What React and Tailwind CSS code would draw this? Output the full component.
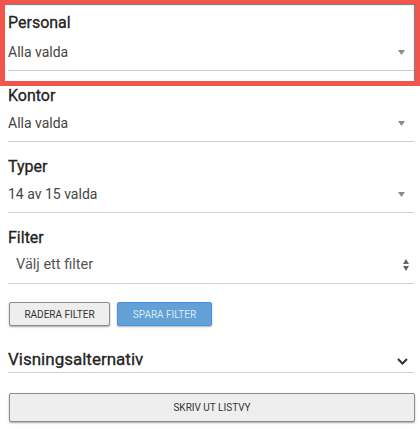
const Caret = () => (
  <svg width="7" height="5" viewBox="0 0 7 5" className="shrink-0">
    <path d="M0 0h7L3.5 5z" fill="#8a8a8a" />
  </svg>
);

function Field({ label, value, first }) {
  return (
    <div className={`border-b border-[#cfcfcf] pb-2 ${first ? 'pt-[13px]' : 'pt-[15px]'}`}>
      <div className="text-base leading-5 text-[#222] [-webkit-text-stroke:0.3px_#222]">{label}</div>
      <div className={`flex items-center justify-between pr-[9px] ${first ? 'mt-[9px]' : 'mt-[7px]'}`}>
        <span className="text-sm leading-5 text-[#444]">{value}</span>
        <Caret />
      </div>
    </div>
  );
}

export default function App() {
  return (
    <div className="w-[420px] bg-white pl-2 pr-1.5 font-['Roboto',sans-serif]">
      <div className="relative">
        <Field first label="Personal" value="Alla valda" />
        {/* highlight box */}
        <div className="pointer-events-none absolute -left-2 -right-1.5 top-0 h-[86px] border-[5px] border-t-4 border-[#f2554b] shadow-[inset_-1px_1px_1px_rgba(0,0,0,0.55)]" />
      </div>
      <Field label="Kontor" value="Alla valda" />
      <Field label="Typer" value="14 av 15 valda" />

      <div className="border-b border-[#cfcfcf] pb-2 pt-[15px]">
        <div className="text-base leading-5 text-[#222] [-webkit-text-stroke:0.3px_#222]">Filter</div>
        <div className="mt-[7px] flex items-center justify-between pl-2 pr-[5px]">
          <span className="text-[14.5px] leading-5 text-[#555]">Välj ett filter</span>
          <svg width="6" height="12" viewBox="0 0 6 12">
            <path d="M3 0L6 5H0z M0 7h6L3 12z" fill="#666" />
          </svg>
        </div>
      </div>

      <div className="mt-[18px] flex gap-[7px] pl-px">
        <button className="h-6 w-[101px] rounded-[2px] border border-[#8c8c8c] bg-[#eeeeee] text-[10px] text-[#333] shadow-[0_1px_2px_rgba(0,0,0,0.35)]">
          RADERA FILTER
        </button>
        <button className="h-6 w-[95px] rounded-[2px] border border-[#4d8fe8] bg-[#62a0d6] text-[10px] text-[#dbe8f5] shadow-[0_1px_2px_rgba(0,0,0,0.3)]">
          SPARA FILTER
        </button>
      </div>

      <div className="mt-[21px] flex items-center justify-between border-b border-[#cfcfcf] pr-[6px] pb-px">
        <span className="text-[17px] leading-6 text-[#222] [-webkit-text-stroke:0.3px_#222]">Visningsalternativ</span>
        <svg width="11" height="7" viewBox="0 0 11 7" className="mt-[5px]">
          <path d="M1 1l4.5 4.5L10 1" fill="none" stroke="#333" strokeWidth="2" />
        </svg>
      </div>

      <div className="pb-[5px] pl-px pt-5">
        <button className="h-[29px] w-[406px] rounded-[2px] border border-[#8c8c8c] bg-[#eeeeee] text-[10px] text-[#333] shadow-[0_1px_2px_rgba(0,0,0,0.35)]">
          SKRIV UT LISTVY
        </button>
      </div>
    </div>
  );
}
